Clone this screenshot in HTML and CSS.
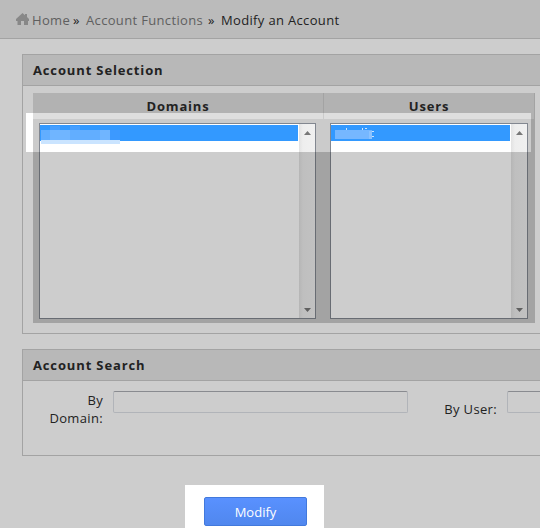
FILE: index.html
```html
<!DOCTYPE html>
<html lang="en">
<head>
<meta charset="utf-8">
<title>Modify an Account</title>
<link rel="stylesheet" href="styles.css">
</head>
<body>
<nav class="crumbs">
  <svg class="home" viewBox="0 0 13 12" width="13" height="12"><path d="M6.500 0 9 2.200V1h2v3l2 2v2h-1v4H8V8H5v4H1.500V8H0V6Z"/></svg>
  <a class="c-home">Home</a><b class="sep">»</b><a class="c-functions">Account Functions</a><b class="sep">»</b><span class="current">Modify an Account</span>
</nav>
<main>
  <section class="panel selection">
    <h2>Account Selection</h2>
    <div class="lists">
      <div class="col domains">
        <h3><span>Domains</span></h3>
        <div class="listbox">
          <div class="options"><div class="option"><svg width="82" height="20"><path fill="#479fff" d="M10 1h10v4H10zM30 1h10v4H30z" /><path fill="#3c99ff" d="M70 5h10v10H70z"/><path fill="#62aeff" d="M1 5h69v10H1z"/><path fill="#70b5ff" d="M10 5h20v10H10zM60 5h10v10H60z"/><path fill="#cae4ff" d="M1 15h79v4H1z"/></svg></div></div>
          <div class="scroll"><svg width="7" height="4"><path d="M3.500 0 7 4H0z"/></svg><svg width="7" height="4"><path d="M0 0h7L3.500 4z"/></svg></div>
        </div>
      </div>
      <div class="col users">
        <h3><span>Users</span></h3>
        <div class="listbox">
          <div class="options"><div class="option"><svg width="50" height="16"><path fill="#cce5ff" d="M15 3h1v2h-1zM31 3h1v2h-1zM34 3h2v1h-2zM41 6h2v1h-2zM41 11h2v1h-2z"/><path fill="#76b7ff" d="M4 5h37v9H4z"/><path fill="#8bc2ff" d="M38 6h3v8h-3z"/></svg></div></div>
          <div class="scroll"><svg width="7" height="4"><path d="M3.500 0 7 4H0z"/></svg><svg width="7" height="4"><path d="M0 0h7L3.500 4z"/></svg></div>
        </div>
      </div>
    </div>
  </section>
  <section class="panel search">
    <h2>Account Search</h2>
    <div class="fields">
      <label class="by-domain">By<br>Domain:</label><input type="text" class="domain-input">
      <label class="by-user">By User:</label><input type="text" class="user-input">
    </div>
  </section>
  <div class="actions"><button>Modify</button></div>
</main>
<div class="dim"></div>
</body>
</html>
```

FILE: styles.css
```css
* { box-sizing: border-box; }
body { margin: 0; width: 540px; height: 528px; overflow: hidden; background: #fff; color: #2b2b2b; font: 13px/18px "Open Sans", "Noto Sans", sans-serif; letter-spacing: .34px; }
.crumbs { display: flex; height: 39px; padding: 11px 0 0 16px; background: #e9e9e9; border-bottom: 1px solid #cbcbcb; white-space: nowrap; }
.home { fill: #aaa; margin: 2px 3px 0 0; flex: none; }
.crumbs a { color: #777; }
.c-home { width: 37px; }
.c-functions { width: 118px; }
.sep { width: 17px; padding-left: 4px; font-weight: 400; }
main { padding-top: 15px; }
.panel { margin-left: 22px; border: 1px solid #cbcbcb; border-right: 0; }
.selection { height: 280px; }
h2 { margin: 0; height: 31px; padding: 6px 10px; border-bottom: 1px solid #cbcbcb; background: #e5e5e5; font-size: 13px; line-height: 18px; letter-spacing: .86px; }
.lists { display: grid; grid-template-columns: 291px 211px; width: 502px; height: 230px; margin: 7px 0 0 10px; background: #cbcbcb; }
h3 { margin: 0; height: 26px; background: #dedede; border-right: 1px solid #cbcbcb; text-align: center; font-size: 13px; line-height: 26px; letter-spacing: .8px; }
.listbox { display: flex; height: 196px; margin: 4px 0 0 6px; width: 277px; border: 1px solid #828790; background: #fff; }
.users .listbox { width: 198px; }
.options { flex: 1; padding-top: 1px; }
.option { height: 16px; background: #3399ff; }
.option svg { display: block; }
.scroll { width: 16px; margin-left: 1px; padding: 7px 0 6px 5px; display: flex; flex-direction: column; justify-content: space-between; background: linear-gradient(90deg, #e2e2e2, #eee 4px, #f0f0f0); }
.scroll svg { fill: #777; }
.search { margin-top: 15px; height: 107px; }
.fields { display: flex; align-items: flex-start; padding-top: 10px; overflow: hidden; }
label { text-align: right; flex: none; }
.by-domain { width: 80px; }
.by-user { width: 89px; padding-top: 9px; }
input { width: 295px; height: 22px; margin: 0 0 0 10px; border: 1px solid #dce0e6; border-top-color: #abadb3; border-radius: 2px; background: #fff; flex: none; }
.user-input { flex: 1; min-width: 0; border-right: 0; border-radius: 2px 0 0 2px; }
.actions { margin: 41px 0 0 204px; }
button { display: block; width: 103px; height: 29px; padding: 1px 0 0; border: 1px solid #4279dc; border-radius: 2px; background: linear-gradient(#5991ff, #5087ee); color: #fff; font: 13px/26px "Open Sans", sans-serif; letter-spacing: 0; }
.dim { position: absolute; inset: 0; background: rgba(0, 0, 0, .196); clip-path: path(evenodd, "M0 0H540V528H0Z M26 113H531V152H26Z M185 485H324V528H185Z"); }
```
